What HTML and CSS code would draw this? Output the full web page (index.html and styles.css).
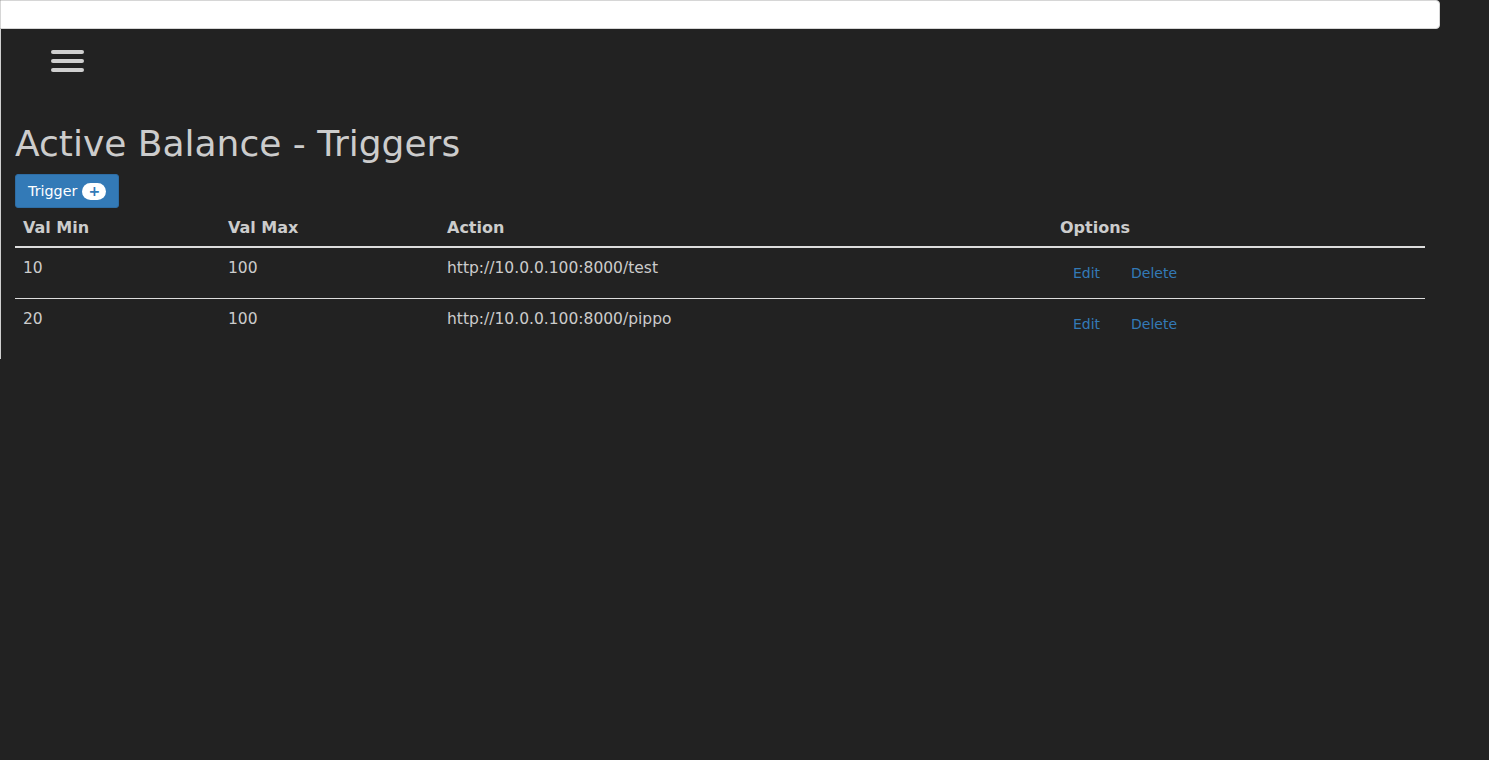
FILE: index.html
```html
<!DOCTYPE html>
<html>
<head>
<meta charset="utf-8">
<title>Active Balance - Triggers</title>
<link rel="stylesheet" href="styles.css">
</head>
<body>
<div class="topbar"></div>
<div class="page">
  <div class="menu-row">
    <button class="hamburger" aria-label="Menu"><span></span><span></span><span></span></button>
  </div>
  <h1 class="title">Active Balance - Triggers</h1>
  <button class="btn-add">Trigger <span class="badge">+</span></button>
  <table class="triggers">
    <thead>
      <tr><th class="c1">Val Min</th><th class="c2">Val Max</th><th class="c3">Action</th><th class="c4">Options</th></tr>
    </thead>
    <tbody>
      <tr><td>10</td><td>100</td><td>http://10.0.0.100:8000/test</td><td class="opts"><button class="link">Edit</button> <button class="link">Delete</button></td></tr>
      <tr><td>20</td><td>100</td><td>http://10.0.0.100:8000/pippo</td><td class="opts"><button class="link">Edit</button> <button class="link">Delete</button></td></tr>
    </tbody>
  </table>
</div>
</body>
</html>
```

FILE: styles.css
```css
html, body {
  margin: 0;
  padding: 0;
  background: #222222;
}
body {
  font-family: "DejaVu Sans", sans-serif;
  font-size: 16px;
  color: #cccccc;
  line-height: 20px;
}
.topbar {
  width: 1440px;
  height: 29px;
  box-sizing: border-box;
  background: #ffffff;
  border: 1px solid #d6d6d6;
  border-radius: 0 4px 4px 0;
}
.page {
  width: 1440px;
  box-sizing: border-box;
  border-left: 1px solid #d0d0d0;
  padding: 0 15px 10px 14px;
}
.menu-row {
  height: 95px;
  display: flex;
  align-items: flex-start;
}
.hamburger {
  margin: 21px 0 0 36px;
  padding: 0;
  border: 0;
  background: none;
  display: flex;
  flex-direction: column;
  gap: 5px;
}
.hamburger span {
  display: block;
  width: 33px;
  height: 4px;
  border-radius: 2px;
  background: #cfcfcf;
}
.title {
  margin: 0 0 10px 0;
  font-size: 36px;
  font-weight: 400;
  line-height: 40px;
  color: #cccccc;
}
.btn-add {
  display: inline-flex;
  align-items: center;
  height: 34px;
  padding: 0 12px 0 12px;
  box-sizing: border-box;
  font-family: "DejaVu Sans", sans-serif;
  font-size: 14.3px;
  color: #ffffff;
  background: #337ab7;
  border: 1px solid #2e6da4;
  border-radius: 3px;
  vertical-align: top;
}
.badge {
  display: inline-block;
  margin-left: 5px;
  width: 24px;
  height: 17px;
  line-height: 17px;
  border-radius: 9px;
  background: #ffffff;
  color: #337ab7;
  font-size: 14px;
  font-weight: 700;
  text-align: center;
}
.triggers {
  width: 1410px;
  border-collapse: collapse;
  margin-top: 2px;
}
.triggers th {
  text-align: left;
  font-weight: 700;
  padding: 8px;
  border-bottom: 2px solid #dddddd;
}
.triggers td {
  padding: 9px 8px 7px;
  font-size: 15.5px;
  line-height: 22px;
  vertical-align: top;
  border-bottom: 1px solid #dddddd;
}
.triggers tbody tr:last-child td {
  border-bottom: 0;
}
.c1 { width: 189px; }
.c2 { width: 203px; }
.c3 { width: 597px; }
.triggers td.opts {
  padding: 8px;
  line-height: 20px;
}
.link {
  font-family: "DejaVu Sans", sans-serif;
  font-size: 14px;
  line-height: 20px;
  padding: 6px 12px;
  border: 1px solid transparent;
  background: none;
  color: #337ab7;
}
```
